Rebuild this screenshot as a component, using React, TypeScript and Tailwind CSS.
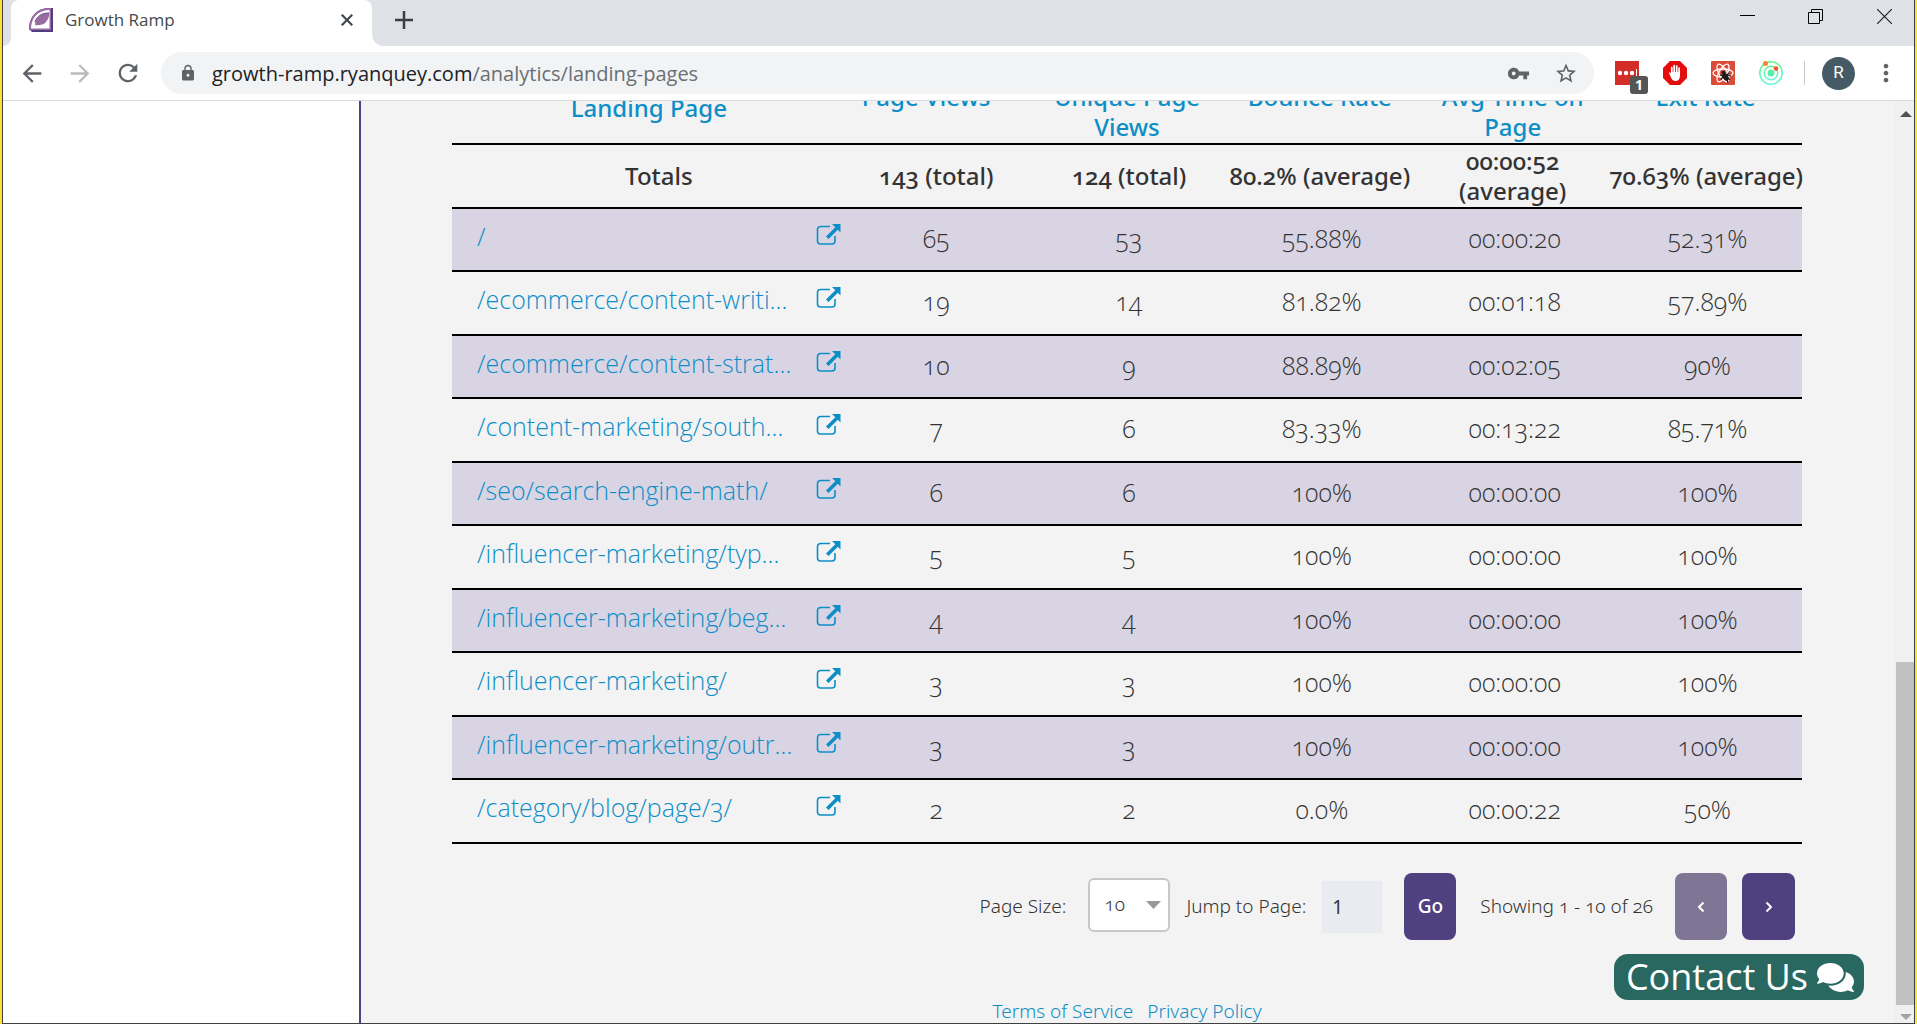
import type { ReactNode } from 'react';
import { FaComments } from 'react-icons/fa';
import { MdArrowBack, MdArrowForward, MdRefresh, MdLock, MdVpnKey, MdStarBorder, MdMoreVert } from 'react-icons/md';

type Row = { path: string; views: string; unique: string; bounce: string; time: string; exit: string };

const rows: Row[] = [
  { path: '/', views: '65', unique: '53', bounce: '55.88%', time: '00:00:20', exit: '52.31%' },
  { path: '/ecommerce/content-writi…', views: '19', unique: '14', bounce: '81.82%', time: '00:01:18', exit: '57.89%' },
  { path: '/ecommerce/content-strat…', views: '10', unique: '9', bounce: '88.89%', time: '00:02:05', exit: '90%' },
  { path: '/content-marketing/south…', views: '7', unique: '6', bounce: '83.33%', time: '00:13:22', exit: '85.71%' },
  { path: '/seo/search-engine-math/', views: '6', unique: '6', bounce: '100%', time: '00:00:00', exit: '100%' },
  { path: '/influencer-marketing/typ…', views: '5', unique: '5', bounce: '100%', time: '00:00:00', exit: '100%' },
  { path: '/influencer-marketing/beg…', views: '4', unique: '4', bounce: '100%', time: '00:00:00', exit: '100%' },
  { path: '/influencer-marketing/', views: '3', unique: '3', bounce: '100%', time: '00:00:00', exit: '100%' },
  { path: '/influencer-marketing/outr…', views: '3', unique: '3', bounce: '100%', time: '00:00:00', exit: '100%' },
  { path: '/category/blog/page/3/', views: '2', unique: '2', bounce: '0.0%', time: '00:00:22', exit: '50%' },
];

function Favicon() {
  return (
    <svg width="24" height="24" viewBox="0 0 24 24" aria-hidden="true">
      <path d="M24 0v24H3L0 21C0 9 8 0 20 0z" fill="#4f3f82" />
      <path d="M22 0v22H0C0 9 8 0 20 0z" fill="#9a6ba3" />
      <path d="M20.500 2v18.500H2C2 10 9 2 20.500 2z" fill="#fff" />
      <path d="M20 5v3c-2 7-6 10-14 9C6 11 11 5 20 5z" fill="#9a6ba3" />
      <path d="M6 14C8 8 13 5 20 5" fill="none" stroke="#5d4a8c" strokeWidth="1" />
      <path d="M20 10v10H8c6-1 9-4 12-10z" fill="#fff" />
    </svg>
  );
}

function ExternalIcon() {
  return (
    <svg width="25" height="22" viewBox="0 0 25 22" fill="none" aria-hidden="true">
      <path d="M14 2.500H4.500a3 3 0 0 0-3 3V17a3 3 0 0 0 3 3H16a3 3 0 0 0 3-3v-5" stroke="#0d8ec7" strokeWidth="1.600" />
      <path d="M16 0h8.500v8.500l-2.700-2.700L12.500 15 10 12.500l9.300-9.200z" fill="#0d8ec7" />
    </svg>
  );
}

function IconButton({ label, children, className = '' }: { label: string; children: ReactNode; className?: string }) {
  return (
    <button type="button" aria-label={label} className={`flex shrink-0 items-center justify-center ${className}`}>
      {children}
    </button>
  );
}

function TabStrip() {
  return (
    <div className="flex h-[46px] shrink-0 items-stretch bg-[#dee1e6]">
      <div className="w-2 shrink-0 bg-white">
        <div className="h-full rounded-br-xl bg-[#dee1e6]" />
      </div>
      <div className="flex w-[361px] items-start rounded-t-lg bg-white pr-[14px] pl-[18px]">
        <div className="flex h-10 w-full items-center">
          <Favicon />
          <span className="ml-3 flex-1 text-[17px] text-[#45494d]">Growth Ramp</span>
          <IconButton label="Close tab" className="size-[22px]">
            <svg width="12" height="12" viewBox="0 0 12 12" stroke="#45494d" strokeWidth="2.200">
              <path d="M.7.7l10.600 10.600M11.300.7L.7 11.300" />
            </svg>
          </IconButton>
        </div>
      </div>
      <div className="flex-1 bg-white">
        <div className="flex h-full items-start justify-between rounded-bl-xl bg-[#dee1e6]">
          <IconButton label="New tab" className="ml-[14px] h-10 w-9">
            <svg width="18" height="18" viewBox="0 0 18 18" stroke="#3c4043" strokeWidth="2.500">
              <path d="M9 0v18M0 9h18" />
            </svg>
          </IconButton>
          <div className="flex h-8 pr-[18px]">
            <IconButton label="Minimize" className="w-[68px]">
              <svg width="15" height="15" viewBox="0 0 15 15" stroke="#000"><path d="M0 6.500h15" /></svg>
            </IconButton>
            <IconButton label="Restore" className="w-[68px]">
              <svg width="15" height="15" viewBox="0 0 15 15" stroke="#000" fill="none">
                <path d="M.5 3.500h11v11H.5zM3.500 3.500v-3h11v11h-3" />
              </svg>
            </IconButton>
            <IconButton label="Close window" className="ml-[23px] w-[24px]">
              <svg width="15" height="15" viewBox="0 0 15 15" stroke="#222" strokeWidth="1.200"><path d="M0 0l15 15M15 0L0 15" /></svg>
            </IconButton>
          </div>
        </div>
      </div>
    </div>
  );
}

function Extensions() {
  return (
    <div className="flex items-center gap-6">
      <button type="button" aria-label="Password manager, 1 item" className="relative size-6 bg-[#d32d27]">
        <svg width="24" height="24" viewBox="0 0 24 24" fill="#fff">
          <circle cx="5" cy="12" r="2.200" /><circle cx="11" cy="12" r="2.200" /><circle cx="17" cy="12" r="2.200" />
          <path d="M21 8h1v8h-1z" />
        </svg>
        <span className="absolute top-[15px] left-[15px] flex h-[18px] w-[18px] items-center justify-center rounded-[3px] bg-[#555] text-sm font-bold text-white">1</span>
      </button>
      <IconButton label="Ad blocker" className="size-6">
        <svg width="24" height="24" viewBox="0 0 24 24">
          <path d="M7 0h10l7 7v10l-7 7H7l-7-7V7z" fill="#e40d0d" />
          <path d="M8.800 13V6.500M11.200 12V4.500M13.700 12V5M16.100 13V7" stroke="#fff" strokeWidth="1.700" strokeLinecap="round" />
          <path d="M8 11h9v4c0 3-2 5-4.300 5-2.400 0-4-1.500-5.200-4.500L6 12c.5-1 1.300-.8 2 .4z" fill="#fff" />
        </svg>
      </IconButton>
      <IconButton label="React Developer Tools" className="size-6">
        <svg width="24" height="24" viewBox="0 0 24 24" fill="none">
          <rect width="24" height="24" rx="1" fill="#dc4a38" />
          <g stroke="#fff" strokeWidth="1.300">
            <ellipse cx="12" cy="12" rx="10" ry="4" />
            <ellipse cx="12" cy="12" rx="10" ry="4" transform="rotate(60 12 12)" />
            <ellipse cx="12" cy="12" rx="10" ry="4" transform="rotate(120 12 12)" />
          </g>
          <ellipse cx="14.500" cy="16" rx="2.800" ry="3.800" fill="#1b1b1b" transform="rotate(-35 14.500 16)" />
          <circle cx="12.500" cy="11.800" r="2" fill="#1b1b1b" />
          <path d="M9 14l3 1-2 4M18 12l-2 2 4 1M16 18l1 4M19 19l-2-2" stroke="#1b1b1b" strokeWidth="1.200" />
        </svg>
      </IconButton>
      <IconButton label="Orbit" className="size-6">
        <svg width="24" height="24" viewBox="0 0 24 24" fill="none">
          <defs>
            <linearGradient id="orbit" x1="0" y1="0" x2="0" y2="1">
              <stop stopColor="#63f28a" /><stop offset="1" stopColor="#68f5dc" />
            </linearGradient>
          </defs>
          <circle cx="12" cy="12" r="11.200" stroke="url(#orbit)" strokeWidth="1.500" />
          <circle cx="12" cy="12" r="6.700" stroke="url(#orbit)" strokeWidth="1.500" />
          <circle cx="12" cy="12" r="3.500" fill="#5af0a5" />
          <circle cx="6.500" cy="2.500" r="2.500" fill="#f58231" />
          <circle cx="17" cy="7.500" r="2.300" fill="#e8562a" />
        </svg>
      </IconButton>
    </div>
  );
}

function Toolbar() {
  return (
    <div className="flex h-[55px] shrink-0 items-center border-b border-[#d8dade] bg-white pr-[14px] pl-[15px] text-[#5f6368]">
      <IconButton label="Back" className="size-[28px]"><MdArrowBack size={29} /></IconButton>
      <IconButton label="Forward" className="ml-5 size-[28px] text-[#babcbe]"><MdArrowForward size={29} /></IconButton>
      <IconButton label="Reload" className="ml-5 size-[28px]"><MdRefresh size={30} /></IconButton>
      <div className="ml-[19px] flex h-[42px] flex-1 items-center rounded-full bg-[#f1f3f4] pr-4 pl-[18px]">
        <MdLock size={18} className="shrink-0" />
        <button type="button" className="ml-[15px] flex-1 pt-px text-left text-[20px] text-[#202124]">
          growth-ramp.ryanquey.com<span className="text-[#6b6f73]">/analytics/landing-pages</span>
        </button>
        <IconButton label="Saved passwords" className="size-6"><MdVpnKey size={23} /></IconButton>
        <IconButton label="Bookmark" className="ml-6 size-6"><MdStarBorder size={25} /></IconButton>
      </div>
      <div className="ml-[21px]"><Extensions /></div>
      <div className="ml-[21px] h-6 w-px bg-[#c8cacd]" />
      <button type="button" aria-label="Profile R" className="ml-[17px] flex size-[33px] items-center justify-center rounded-full bg-[#455a64] font-['Roboto'] text-[17px] text-white">R</button>
      <IconButton label="Menu" className="ml-[17px] size-[28px]"><MdMoreVert size={28} /></IconButton>
    </div>
  );
}

function HeaderCell({ children }: { children: ReactNode }) {
  return (
    <th scope="col" className="p-0 align-top font-medium text-[#0d8ec7]">
      <button type="button" className="w-full px-4">{children}</button>
    </th>
  );
}

function LandingPagesTable() {
  return (
    <table className="-mt-[19px] w-full table-fixed border-collapse text-center text-[25px] leading-[30px] font-light text-[#333] oldstyle-nums">
      <thead className="font-['Noto_Sans',sans-serif] text-[24px]">
        <tr className="h-[62px] border-b-2 border-black">
          <th scope="col" className="w-2/7 p-0 pt-[11px] pl-2 align-top font-medium text-[#0d8ec7]">
            <button type="button">Landing Page</button>
          </th>
          <th scope="col" className="p-0 pr-4 align-top font-medium text-[#0d8ec7]">
            <button type="button">Page Views</button>
          </th>
          <HeaderCell>Unique Page Views</HeaderCell>
          <HeaderCell>Bounce Rate</HeaderCell>
          <HeaderCell>Avg Time on Page</HeaderCell>
          <HeaderCell>Exit Rate</HeaderCell>
        </tr>
        <tr className="h-16 border-b-2 border-black font-medium">
          <th scope="row" className="p-0 pl-7 font-medium">Totals</th>
          <td className="p-0 pl-1">143 (total)</td>
          <td className="p-0 pl-1">124 (total)</td>
          <td className="p-0 whitespace-nowrap">80.2% (average)</td>
          <td className="p-0">00:00:52 (average)</td>
          <td className="p-0 whitespace-nowrap">70.63% (average)</td>
        </tr>
      </thead>
      <tbody>
        {rows.map((r) => (
          <tr key={r.path} className="h-[63px] border-b-2 border-black odd:bg-[#d9d4e3] even:h-16">
            <th scope="row" className="p-0 text-left font-light">
              <div className="flex items-center justify-between pb-2 pl-[25px]">
                <a href={r.path} className="whitespace-nowrap text-[#0d8ec7]">{r.path}</a>
                <a href={r.path} aria-label={`Open ${r.path}`} className="-mr-[3px] shrink-0 pb-0.5"><ExternalIcon /></a>
              </div>
            </th>
            <td className="p-0 pb-1 pl-1">{r.views}</td>
            <td className="p-0 pb-1 pl-1">{r.unique}</td>
            <td className="p-0 pb-1 pl-1">{r.bounce}</td>
            <td className="p-0 pb-1 pl-1">{r.time}</td>
            <td className="p-0 pb-1 pl-1">{r.exit}</td>
          </tr>
        ))}
      </tbody>
    </table>
  );
}

function Pagination() {
  return (
    <form className="mt-[29px] flex items-center justify-end pr-[7px] font-['Noto_Sans',sans-serif] text-[19px] font-light text-[#333] oldstyle-nums" onSubmit={(e) => e.preventDefault()}>
      <label htmlFor="page-size">Page Size:</label>
      <div className="relative mr-4 mb-1 ml-[22px]">
        <select id="page-size" defaultValue="10" className="block h-[54px] w-[82px] appearance-none rounded-md border-2 border-[#c8c8c8] bg-white pl-[14px] text-[19px] font-light">
          <option>10</option>
          <option>25</option>
          <option>50</option>
        </select>
        <svg width="15" height="8" viewBox="0 0 15 8" className="pointer-events-none absolute top-[23px] right-[9px]" aria-hidden="true">
          <path d="M0 0h15L7.500 8z" fill="#999" />
        </svg>
      </div>
      <label htmlFor="jump-page">Jump to Page:</label>
      <input id="jump-page" type="text" defaultValue="1" className="ml-4 h-[52px] w-[60px] bg-[#e8ecf1] pl-[10px] text-[19px] font-normal normal-nums" />
      <button type="submit" className="ml-[22px] h-[67px] w-[52px] rounded-lg bg-[#4f4080] font-medium text-white">Go</button>
      <span className="mr-[22px] ml-6">Showing 1 - 10 of 26</span>
      <IconButton label="Previous page" className="h-[67px] w-[52px] rounded-lg bg-[#7f7696]">
        <svg width="8" height="12" viewBox="0 0 8 12" fill="none" stroke="#fff" strokeWidth="2"><path d="M6.500 1.500L2 6l4.500 4.500" /></svg>
      </IconButton>
      <IconButton label="Next page" className="ml-[15px] h-[67px] w-[53px] rounded-lg bg-[#4f4080]">
        <svg width="8" height="12" viewBox="0 0 8 12" fill="none" stroke="#fff" strokeWidth="2"><path d="M1.500 1.500L6 6l-4.500 4.500" /></svg>
      </IconButton>
    </form>
  );
}

function ScrollRail() {
  return (
    <div className="flex w-5 shrink-0 flex-col items-end bg-[#f0f0f0]" aria-hidden="true">
      <svg width="18" height="24" viewBox="0 0 18 24"><path d="M4 16h12l-6-6z" fill="#505050" /></svg>
      <div className="mt-auto h-[343px] w-[18px] bg-[#c1c1c1]" />
      <svg width="18" height="18" viewBox="0 0 18 18"><path d="M4 9h12l-6 6z" fill="#a3a3a3" /></svg>
    </div>
  );
}

export default function App() {
  return (
    <div className="flex h-screen flex-col overflow-hidden border-x-2 border-[#fddf35] bg-white font-['Open_Sans',sans-serif]">
      <div className="flex min-h-0 flex-1 flex-col border-x border-b border-[#404040]">
        <TabStrip />
        <Toolbar />
        <div className="flex min-h-0 flex-1">
          <aside className="w-[358px] shrink-0 border-r-2 border-[#4f4080] bg-white" />
          <main className="relative min-w-0 flex-1 overflow-hidden bg-[#f3f3f3] pr-[92px] pl-[91px]">
            <LandingPagesTable />
            <Pagination />
            <footer className="mt-[59px] flex justify-center gap-[14px] font-['Noto_Sans',sans-serif] text-[19px] leading-6 font-light text-[#0d8ec7]">
              <a href="#terms">Terms of Service</a>
              <a href="#privacy">Privacy Policy</a>
            </footer>
            <button type="button" className="absolute right-[30px] bottom-[23px] flex h-[46px] items-center gap-[9px] rounded-[14px] bg-[#286860] pr-[10px] pl-[12px] text-[36px] leading-none text-white">
              Contact Us
              <FaComments size={37} />
            </button>
          </main>
          <ScrollRail />
        </div>
      </div>
    </div>
  );
}
